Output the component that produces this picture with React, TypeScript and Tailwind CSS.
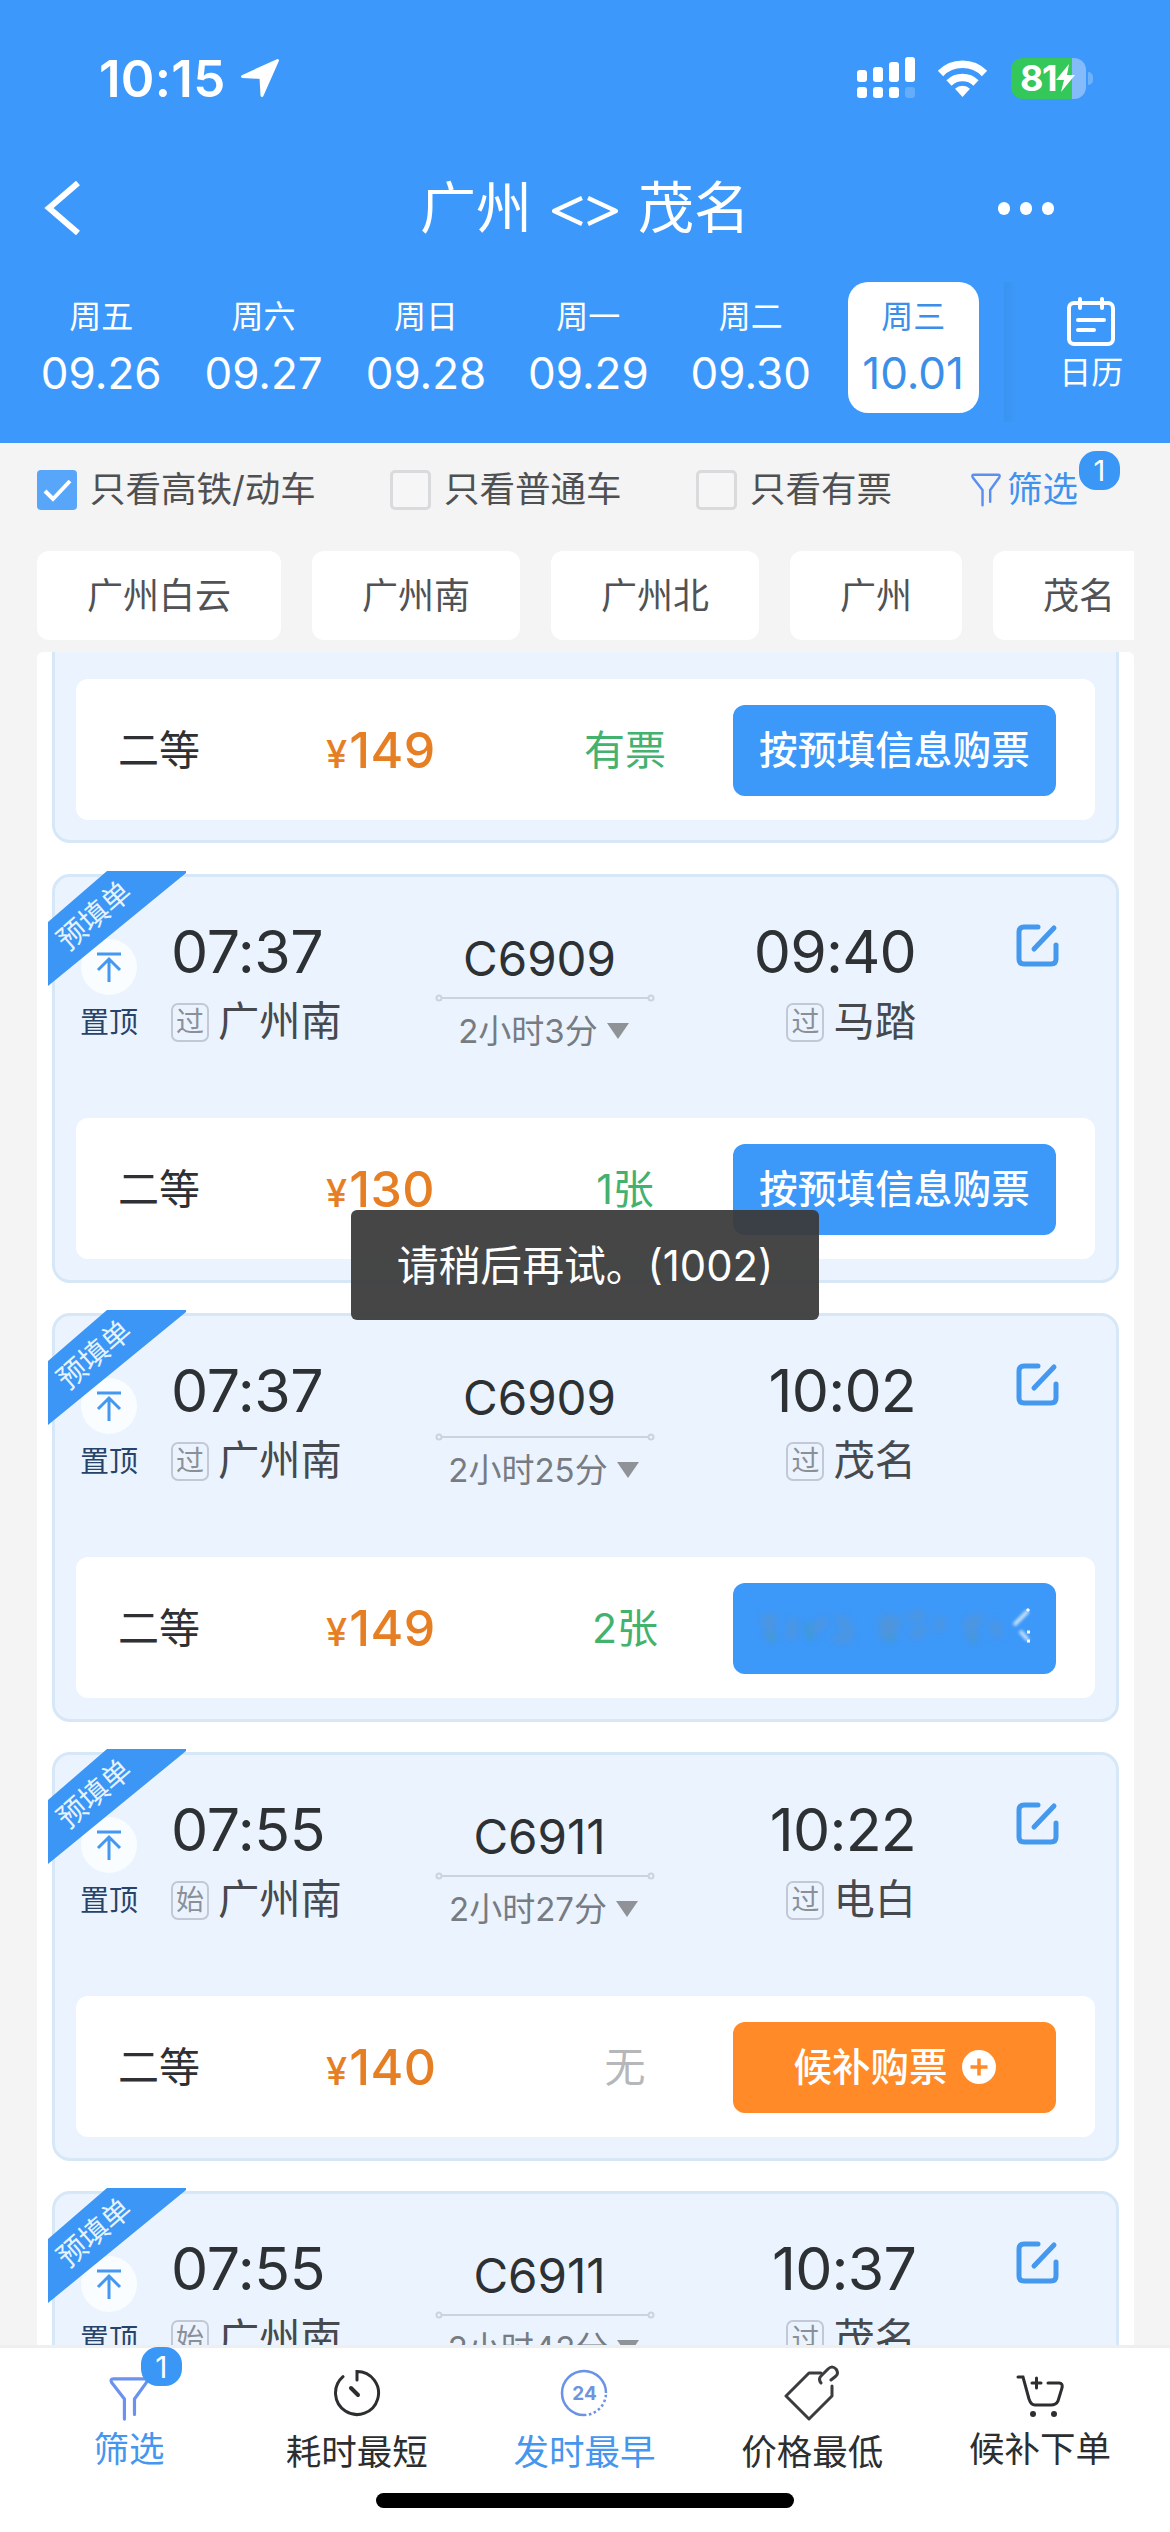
import type { ReactNode } from 'react';

const days = [
  { week: '周五', date: '09.26' },
  { week: '周六', date: '09.27' },
  { week: '周日', date: '09.28' },
  { week: '周一', date: '09.29' },
  { week: '周二', date: '09.30' },
  { week: '周三', date: '10.01', active: true },
];

const stations = ['广州白云', '广州南', '广州北', '广州', '茂名'];

type Action = 'buy' | 'loading' | 'standby';

type Train = {
  id: string;
  depart: string;
  fromTag: string;
  from: string;
  code: string;
  duration: string;
  arrive: string;
  to: string;
  price: string;
  left: string;
  soldOut?: boolean;
  action: Action;
};

const trains: Train[] = [
  { id: 't1', depart: '07:37', fromTag: '过', from: '广州南', code: 'C6909', duration: '2小时3分', arrive: '09:40', to: '马踏', price: '130', left: '1张', action: 'buy' },
  { id: 't2', depart: '07:37', fromTag: '过', from: '广州南', code: 'C6909', duration: '2小时25分', arrive: '10:02', to: '茂名', price: '149', left: '2张', action: 'loading' },
  { id: 't3', depart: '07:55', fromTag: '始', from: '广州南', code: 'C6911', duration: '2小时27分', arrive: '10:22', to: '电白', price: '140', left: '无', soldOut: true, action: 'standby' },
  { id: 't4', depart: '07:55', fromTag: '始', from: '广州南', code: 'C6911', duration: '2小时42分', arrive: '10:37', to: '茂名', price: '149', left: '有票', action: 'buy' },
];

function StatusBar() {
  return (
    <div className="flex h-[156px] items-center pl-[99px] pr-[77px]">
      <span className="text-[51px] leading-none font-semibold tracking-[0.3px]">10:15</span>
      <svg className="ml-[14px] h-[40px] w-[40px]" viewBox="0 0 40 40" fill="#fff" stroke="#fff" strokeWidth="3" strokeLinejoin="round">
        <path d="M37.500 2.500L22 37.500 21 19.500 2.500 18.500z" />
      </svg>
      <svg className="ml-auto h-[42px] w-[58px]" viewBox="0 0 58 42" fill="#fff">
        <rect x="0" y="13" width="10" height="12" rx="3" />
        <rect x="16" y="10" width="10" height="15" rx="3" />
        <rect x="32" y="5" width="10" height="20" rx="3" />
        <rect x="48" y="0" width="10" height="25" rx="3" />
        <rect x="0" y="30" width="10" height="11" rx="3" />
        <rect x="16" y="30" width="10" height="11" rx="3" />
        <rect x="32" y="30" width="10" height="11" rx="3" />
        <rect x="48" y="30" width="10" height="11" rx="3" opacity="0.2" />
      </svg>
      <svg className="ml-[22px] h-[38px] w-[51px]" viewBox="0 0 51 38" fill="none" stroke="#fff">
        <path d="M3.500 14.500a31 31 0 0 1 44 0" strokeWidth="7.500" />
        <path d="M12 24a19.500 19.500 0 0 1 27 0" strokeWidth="7.500" />
        <path d="M25.500 38l-7.500-8.200a11 11 0 0 1 15 0z" fill="#fff" stroke="none" />
      </svg>
      <div className="ml-[23px] flex h-[41px] w-[75px] items-center overflow-hidden rounded-[12px] bg-gradient-to-r from-[#34c759] from-81% to-[#83bbfb] to-81% pl-[9px]">
        <span className="text-[36px] leading-none font-bold tracking-[-1.5px]">81</span>
        <svg className="h-[28px] w-[20px]" viewBox="0 0 20 28" fill="#fff">
          <path d="M13 0L0 16h8L5 28 19 11h-8z" />
        </svg>
      </div>
      <div className="ml-[2px] h-[13px] w-[5px] rounded-r-full bg-[#6fb2fc]" />
    </div>
  );
}

function NavBar() {
  return (
    <div className="grid h-[104px] grid-cols-3 items-center pl-[44px] pr-[116px]">
      <svg className="h-[54px] w-[38px]" viewBox="0 0 38 54" fill="none" stroke="#fff" strokeWidth="6">
        <path d="M34 2L5 27l29 25" />
      </svg>
      <h1 className="-mr-[72px] flex items-center justify-center text-[56px] leading-none whitespace-nowrap">
        广州
        <svg className="mx-[19px] mt-[5px] h-[32px] w-[68px]" viewBox="0 0 68 32" fill="none" stroke="#fff" strokeWidth="4.200" strokeLinejoin="round">
          <path d="M31 3L3 16l28 13M37 3l28 13-28 13" />
        </svg>
        茂名
      </h1>
      <div className="flex justify-end gap-[10px]">
        <i className="h-[13px] w-[12px] rounded-full bg-white" />
        <i className="h-[13px] w-[12px] rounded-full bg-white" />
        <i className="h-[13px] w-[12px] rounded-full bg-white" />
      </div>
    </div>
  );
}

function DateBar() {
  return (
    <div className="flex h-[183px] pl-[20px] pt-[22px]">
      {days.map((day) => (
        <div key={day.date} className="flex w-[162.4px] shrink-0 justify-center">
          <div
            className={
              day.active
                ? 'flex h-[131px] w-[131px] flex-col items-center rounded-[20px] bg-white text-[#3b8fe8]'
                : 'flex h-[131px] w-[131px] flex-col items-center'
            }
          >
            <span className="mt-[18px] text-[32px] leading-[34px]">{day.week}</span>
            <span className="mt-[15px] text-[44px] leading-[48px]">{day.date}</span>
          </div>
        </div>
      ))}
      <div className="ml-[10px] h-[140px] w-[16px] shrink-0 bg-gradient-to-r from-black/4 to-transparent" />
      <div className="ml-[26px] flex w-[90px] shrink-0 flex-col items-center pt-[15px]">
        <svg className="h-[50px] w-[50px]" viewBox="0 0 50 50" fill="none" stroke="#fff" strokeWidth="4" strokeLinecap="round">
          <rect x="3" y="6" width="44" height="41" rx="5" />
          <path d="M14 2v9M36 2v9M12 23h26M12 33h16" />
        </svg>
        <span className="mt-[9px] text-[32px] leading-[34px]">日历</span>
      </div>
    </div>
  );
}

function CheckItem({ label, checked, className }: { label: string; checked?: boolean; className: string }) {
  return (
    <label className={`flex items-center ${className}`}>
      {checked ? (
        <svg className="h-[40px] w-[40px]" viewBox="0 0 40 40">
          <rect width="40" height="40" rx="4" fill="#57a6fa" />
          <path d="M8 21l8 8 17-18" fill="none" stroke="#fff" strokeWidth="4" />
        </svg>
      ) : (
        <span className="h-[40px] w-[41px] rounded-[5px] border-[3px] border-[#d9dadc] bg-[#f6f6f6]" />
      )}
      <span className="ml-[13px] text-[35.5px] leading-none whitespace-nowrap">{label}</span>
    </label>
  );
}

function FunnelIcon({ className }: { className: string }) {
  return (
    <svg className={className} viewBox="0 0 46 48" fill="none" stroke="currentColor" strokeWidth="3.500" strokeLinecap="round" strokeLinejoin="round">
      <path d="M18 46V24L4 6q-2-4 2-4h34q4 0 2 4L29 24v17" />
    </svg>
  );
}

function Filters() {
  return (
    <div className="flex h-[94px] items-center pl-[37px] text-[#4e5052]">
      <CheckItem label="只看高铁/动车" checked className="w-[353px]" />
      <CheckItem label="只看普通车" className="w-[306px]" />
      <CheckItem label="只看有票" className="w-[274px]" />
      <div className="relative flex items-center text-[#3f92ee]">
        <FunnelIcon className="h-[34px] w-[32px] text-[#5a8ff0]" />
        <span className="ml-[5px] text-[35.5px] leading-none">筛选</span>
        <span className="absolute -right-[42px] -top-[21px] flex h-[39px] w-[41px] items-center justify-center rounded-[17px] bg-[#3b97f6] text-[29px] leading-none text-white">
          1
        </span>
      </div>
    </div>
  );
}

function Stations() {
  return (
    <div className="mt-[14px] mr-[36px] ml-[37px] flex gap-[31px] overflow-hidden">
      {stations.map((name) => (
        <button
          key={name}
          className="h-[89px] shrink-0 rounded-[12px] bg-white px-[50px] text-[36px] leading-none whitespace-nowrap text-[#505255]"
        >
          {name}
        </button>
      ))}
    </div>
  );
}

function ActionButton({ type }: { type: Action }) {
  if (type === 'standby') {
    return (
      <button className="flex h-[91px] w-[323px] items-center justify-center gap-[14px] rounded-[12px] bg-[#ff8a27] text-[38.5px] leading-none font-medium text-white">
        候补购票
        <svg className="h-[34px] w-[34px]" viewBox="0 0 34 34">
          <circle cx="17" cy="17" r="17" fill="#fff" />
          <path d="M17 8.500v17M8.500 17h17" stroke="#ff8a27" strokeWidth="3.500" />
        </svg>
      </button>
    );
  }
  if (type === 'loading') {
    return (
      <button className="flex h-[91px] w-[323px] items-center justify-center rounded-[12px] bg-[#3c98f9]">
        {/* label fading out while the order is being submitted */}
        <svg className="h-[42px] w-[278px]" viewBox="0 0 278 42" fill="none">
          <g className="blur-[4px]" stroke="#7390a8" strokeWidth="8" opacity="0.4">
            <path d="M6 14l14-4M14 8v26M38 12l-4 20M54 26l16-14M82 10l14 14M78 32l18-2M126 14h14l-6 18M128 8v24M152 12l16-6M156 30l14-10M184 10v14M208 18l18-8M216 12v22M238 14l4 16" />
          </g>
          <g className="blur-[3px]" stroke="#3f9fb4" strokeWidth="6" opacity="0.5">
            <path d="M14 26l4 8M50 16l6 18M132 30l6 4M214 30l6 4" />
          </g>
          <path className="blur-[1.5px]" d="M272 4q-6 6-14 14M264 24l8 9" stroke="#c5e0fb" strokeWidth="4" />
          <path d="M271 4l2-2M271 25h3M271 34h3" stroke="#fff" strokeWidth="3" />
        </svg>
      </button>
    );
  }
  return (
    <button className="h-[91px] w-[323px] rounded-[12px] bg-[#3c98f9] text-[38.7px] leading-none font-medium whitespace-nowrap text-white">
      按预填信息购票
    </button>
  );
}

function SeatRow({ price, left, soldOut, action }: Pick<Train, 'price' | 'left' | 'soldOut' | 'action'>) {
  return (
    <div className="flex h-[141px] items-center rounded-[12px] bg-white pt-[1px] pr-[39px] pl-[42px]">
      <span className="w-[208px] text-[41px] leading-none text-[#2e3033]">二等</span>
      <span className="flex w-[202px] items-baseline text-[#e67e24]">
        <span className="text-[38px] leading-none font-medium">¥</span>
        <span className="ml-[2px] text-[50px] leading-none font-medium tracking-[0.5px]">{price}</span>
      </span>
      <span
        className={
          soldOut
            ? 'w-[194px] text-center text-[41px] leading-none text-[#b5b7ba]'
            : 'w-[194px] text-center text-[41px] leading-none text-[#43b26f]'
        }
      >
        {left}
      </span>
      <div className="ml-auto">
        <ActionButton type={action} />
      </div>
    </div>
  );
}

function StopTag({ children }: { children: ReactNode }) {
  return (
    <span className="flex h-[39px] w-[38px] items-center justify-center rounded-[7px] border-2 border-[#c3c8d6] text-[28px] leading-none text-[#8b8f98]">
      {children}
    </span>
  );
}

function Ribbon() {
  return (
    <div className="absolute -top-[6px] -left-[7px] h-[115px] w-[138px] overflow-hidden">
      <svg className="absolute inset-0 h-full w-full" viewBox="0 0 138 115">
        <path d="M0 51L59 0h79v2L0 115z" fill="#3b96f5" />
      </svg>
      <span className="absolute top-[30px] left-[-4px] w-[100px] -rotate-[41deg] text-center text-[29px] leading-none whitespace-nowrap text-[#e6f3ff]">
        预填单
      </span>
    </div>
  );
}

function TrainCard({ train }: { train: Train }) {
  return (
    <div className="relative mb-[30px] h-[409px] shrink-0 rounded-[18px] border-[3px] border-[#d6e7f8] bg-[#ebf4fe] px-[21px]">
      <div className="flex h-[241px]">
        <div className="flex w-[66px] shrink-0 flex-col items-center pt-[62px]">
          <div className="flex h-[56px] w-[56px] items-center justify-center rounded-full bg-[#fafdff]">
            <svg className="h-[30px] w-[26px]" viewBox="0 0 26 30" fill="none" stroke="#4598f0" strokeWidth="3">
              <path d="M1 2h24M13 30V7M2 18L13 7l11 11" />
            </svg>
          </div>
          <span className="mt-[12px] text-[29px] leading-[32px] whitespace-nowrap text-[#28436a]">置顶</span>
        </div>

        <div className="w-[267px] shrink-0 pt-[44px] pl-[29px]">
          <div className="text-[59px] leading-[62px] tracking-[-0.4px] text-[#2d3134]">{train.depart}</div>
          <div className="mt-[18px] flex h-[42px] items-center">
            <StopTag>{train.fromTag}</StopTag>
            <span className="ml-[9px] text-[41.3px] leading-none text-[#46494e]">{train.from}</span>
          </div>
        </div>

        <div className="flex w-[272px] shrink-0 flex-col items-center pt-[55px]">
          <div className="mr-[11px] text-[47.5px] leading-[54px] text-[#2d3134]">{train.code}</div>
          <svg className="mt-[8px] h-[8px] w-[220px]" viewBox="0 0 220 8" fill="none" stroke="#cbd3de" strokeWidth="2">
            <circle cx="4" cy="4" r="2.500" />
            <path d="M7 4h206" />
            <circle cx="216" cy="4" r="2.500" />
          </svg>
          <div className="mt-[11px] mr-[3px] flex items-center text-[33px] leading-[36px] text-[#777b82]">
            {train.duration}
            <svg className="ml-[9px] h-[16px] w-[22px]" viewBox="0 0 22 16" fill="#8f9296">
              <path d="M0 0h22L11 16z" />
            </svg>
          </div>
        </div>

        <div className="flex w-[235px] shrink-0 flex-col items-end pt-[44px]">
          <div className="text-[59px] leading-[62px] tracking-[-0.8px] text-[#2d3134]">{train.arrive}</div>
          <div className="mt-[18px] flex h-[42px] items-center">
            <StopTag>过</StopTag>
            <span className="ml-[9px] text-[41.3px] leading-none text-[#46494e]">{train.to}</span>
          </div>
        </div>

        <svg className="mt-[46px] ml-[100px] h-[44px] w-[44px] shrink-0" viewBox="0 0 44 44" fill="none" stroke="#4499ef" strokeWidth="5" strokeLinecap="round">
          <path d="M22 4H8q-5 0-5 5v27q0 5 5 5h27q5 0 5-5V22M18 26L38 5" />
        </svg>
      </div>

      <SeatRow price={train.price} left={train.left} soldOut={train.soldOut} action={train.action} />
      <Ribbon />
    </div>
  );
}

function TabItem({ label, active, raised, children }: { label: string; active?: boolean; raised?: boolean; children: ReactNode }) {
  return (
    <div className={active ? 'flex flex-1 flex-col items-center text-[#4496ee]' : 'flex flex-1 flex-col items-center text-[#2c2e30]'}>
      <div className="flex h-[83px] items-center justify-center pt-[5px]">{children}</div>
      <span className={raised ? 'text-[35.5px] leading-[36px] whitespace-nowrap' : 'mt-[3px] text-[35.5px] leading-[36px] whitespace-nowrap'}>
        {label}
      </span>
    </div>
  );
}

function TabBar() {
  return (
    <div className="h-[187px] shrink-0 border-t-[3px] border-[#eeefef] bg-white pt-[1px]">
      <div className="flex h-[144px] pr-[16px] pl-[15px]">
        <TabItem label="筛选" active raised>
          <div className="relative mt-[12px]">
            <FunnelIcon className="h-[48px] w-[42px] text-[#6a92ee]" />
            <span className="absolute -top-[28px] -right-[32px] flex h-[39px] w-[41px] items-center justify-center rounded-[17px] bg-[#3b97f6] text-[30px] leading-none text-white">
              1
            </span>
          </div>
        </TabItem>
        <TabItem label="耗时最短">
          <svg className="h-[48px] w-[48px]" viewBox="0 0 48 48" fill="none" stroke="#2c2e30" strokeWidth="3" strokeLinecap="round">
            <path d="M24 11V2.500a21.500 21.500 0 1 1-14 5.200" />
            <path d="M18 19l7 7" strokeWidth="4" />
          </svg>
        </TabItem>
        <TabItem label="发时最早" active>
          <div className="relative flex h-[48px] w-[48px] items-center justify-center">
            <svg className="absolute inset-0" viewBox="0 0 48 48" fill="none" stroke="#6a92e6" strokeWidth="2.500">
              <path d="M46 24A22 22 0 1 0 24 46" />
              <path d="M24 46A22 22 0 0 0 46 24" strokeDasharray="2.500 2.500" />
            </svg>
            <span className="text-[19px] leading-none font-bold text-[#6f93de]">24</span>
          </div>
        </TabItem>
        <TabItem label="价格最低">
          <svg className="h-[56px] w-[56px]" viewBox="0 0 56 56" fill="none" stroke="#3a3c3e" strokeWidth="3" strokeLinejoin="round" strokeLinecap="round">
            <path d="M37 8H25L2 31l23 23 23-23V21" />
            <path d="M37 18q-3-4 0-7l7-7q4-4 8 0 3 4 0 7l-5 4" />
          </svg>
        </TabItem>
        <TabItem label="候补下单" raised>
          <svg className="mt-[5px] h-[46px] w-[48px]" viewBox="0 0 48 46" fill="none" stroke="#2c2e30" strokeWidth="3" strokeLinecap="round">
            <path d="M2 4h5l6 22q2 6 6 6h16q5 0 7-4l4-13q1-5-3-5H32M16 10h9M20.500 5v10" />
            <circle cx="17" cy="41" r="3" fill="#2c2e30" stroke="none" />
            <circle cx="38" cy="41" r="3" fill="#2c2e30" stroke="none" />
          </svg>
        </TabItem>
      </div>
      <div className="mx-auto h-[15px] w-[418px] rounded-full bg-black" />
    </div>
  );
}

export default function App() {
  return (
    <div className="relative flex h-[2532px] w-[1170px] flex-col overflow-hidden bg-[#f4f4f4] font-[Inter,'Noto_Sans_CJK_SC',sans-serif]">
      <header className="h-[443px] shrink-0 bg-[#3c99fb] text-white">
        <StatusBar />
        <NavBar />
        <DateBar />
      </header>

      <Filters />
      <Stations />

      <main className="mt-[12px] mr-[36px] ml-[37px] flex h-[1693px] flex-col overflow-hidden rounded-t-[6px] bg-white px-[15px]">
        <div className="mb-[31px] h-[191px] shrink-0 rounded-b-[18px] border-x-[3px] border-b-[3px] border-[#d6e7f8] bg-[#ebf4fe] px-[21px] pt-[27px]">
          <SeatRow price="149" left="有票" action="buy" />
        </div>
        {trains.map((train) => (
          <TrainCard key={train.id} train={train} />
        ))}
      </main>

      <TabBar />

      <div className="absolute top-[1210px] left-[351px] flex h-[110px] w-[468px] items-center justify-center rounded-[6px] bg-[#3a3a3a]/94 pt-[3px] text-[41.8px] leading-none whitespace-nowrap text-white">
        请稍后再试。(1002)
      </div>
    </div>
  );
}
